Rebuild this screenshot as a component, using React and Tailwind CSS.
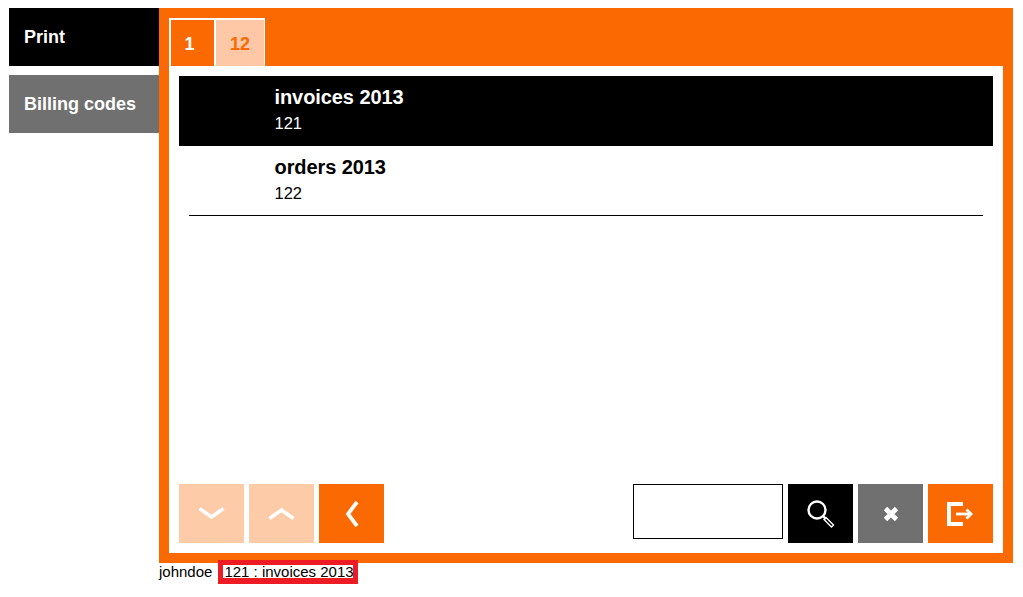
import React from "react";

const Btn = ({ bg, children, ml = "" }) => (
  <button className={`w-[65px] h-[59px] flex items-center justify-center ${bg} ${ml}`}>{children}</button>
);

const Down = () => (
  <svg width="27" height="13" viewBox="0 0 27 13" fill="none" stroke="#fff" strokeWidth="3.6"><path d="M1.5 1.5 L13.5 10 L25.5 1.5" /></svg>
);
const Up = () => (
  <svg width="27" height="13" viewBox="0 0 27 13" fill="none" stroke="#fff" strokeWidth="3.6"><path d="M1.5 11.5 L13.5 3 L25.5 11.5" /></svg>
);
const Left = () => (
  <svg width="14" height="26" viewBox="0 0 14 26" fill="none" stroke="#fff" strokeWidth="3.8"><path d="M12 1 L3 13 L12 25" /></svg>
);
const Search = () => (
  <svg width="28" height="28" viewBox="0 0 28 28" fill="none" stroke="#fff">
    <circle cx="10" cy="10" r="8.5" strokeWidth="2.4" />
    <path d="M16 16 L19 19" strokeWidth="2.4" />
    <path d="M19 17.5 L26.5 25 L24.5 27 L17 19.5 Z" strokeWidth="1.4" />
  </svg>
);
const Close = () => (
  <svg width="16" height="16" viewBox="0 0 16 16" fill="none" stroke="#fff" strokeWidth="4.8"><path d="M2.5 2.5 L13.5 13.5 M13.5 2.5 L2.5 13.5" /></svg>
);
const Exit = () => (
  <svg width="27" height="24" viewBox="0 0 27 24" fill="none" stroke="#fff">
    <path d="M16 2 H2 V22 H16" strokeWidth="4" />
    <path d="M9 12 H23" strokeWidth="2.8" />
    <path d="M19.5 7.5 L24 12 L19.5 16.5" strokeWidth="2.8" />
  </svg>
);

const Row = ({ title, code, active }) => (
  <div className={`h-[70px] pl-[95.5px] pt-[8px] ${active ? "bg-black text-white" : "bg-white text-black"}`}>
    <div className="text-[20px] leading-[26px] font-bold tracking-[-0.08px]">{title}</div>
    <div className="text-[16.5px] leading-[18px] mt-[4px]">{code}</div>
  </div>
);

export default function App() {
  return (
    <div className="w-[1023px] h-[597px] bg-white pt-[8px] pl-[9px] overflow-hidden font-['Liberation_Sans',Arial,sans-serif] text-black">
      <div className="flex">
        <nav className="w-[150px] flex flex-col gap-[9px] text-white text-[18px] font-bold">
          <div className="h-[58px] bg-black pl-[15px] pt-[19px] leading-[21px]">Print</div>
          <div className="h-[58px] bg-[#707070] pl-[15px] pt-[19px] leading-[21px]">Billing codes</div>
        </nav>
        <main className="w-[854px] h-[555px] bg-[#fb6a02] p-[10px] pb-[10px] flex flex-col">
          <div className="flex h-[48px] w-[96px] bg-white pt-[2px] pl-[2px] pr-[1px] gap-[2px] text-[18px] font-bold">
            <div className="w-[43px] bg-[#fb6a02] text-white flex items-center justify-center pt-[2px] pr-[6px]">1</div>
            <div className="w-[48px] bg-[#fec8a6] text-[#fb6a02] flex items-center justify-center pt-[2px]">12</div>
          </div>
          <div className="flex-1 bg-white p-[10px] flex flex-col justify-between">
            <div className="flex flex-col">
              <Row title="invoices 2013" code="121" active />
              <Row title="orders 2013" code="122" />
              <div className="h-px bg-black mx-[10px] -mt-px relative" />
            </div>
            <div className="flex items-start">
              <div className="flex gap-[5px]">
                <Btn bg="bg-[#fecba8]"><Down /></Btn>
                <Btn bg="bg-[#fecba8]"><Up /></Btn>
                <Btn bg="bg-[#fb6a02]"><Left /></Btn>
              </div>
              <div className="ml-auto flex gap-[5px]">
                <input className="w-[150px] h-[55px] border border-black bg-white" aria-label="search" />
                <Btn bg="bg-black"><Search /></Btn>
                <Btn bg="bg-[#707070]"><Close /></Btn>
                <Btn bg="bg-[#fb6a02]"><Exit /></Btn>
              </div>
            </div>
          </div>
        </main>
      </div>
      <div className="flex items-start pl-[150px] -mt-[3px] relative text-[15px] leading-[14px]">
        <span className="mt-[5px]">johndoe</span>
        <span className="ml-[6px] w-[140px] h-[24px] border-[5px] border-b-[6px] border-[#ed1c24] bg-white text-black whitespace-nowrap pl-[1px]">121 : invoices 2013</span>
      </div>
    </div>
  );
}
